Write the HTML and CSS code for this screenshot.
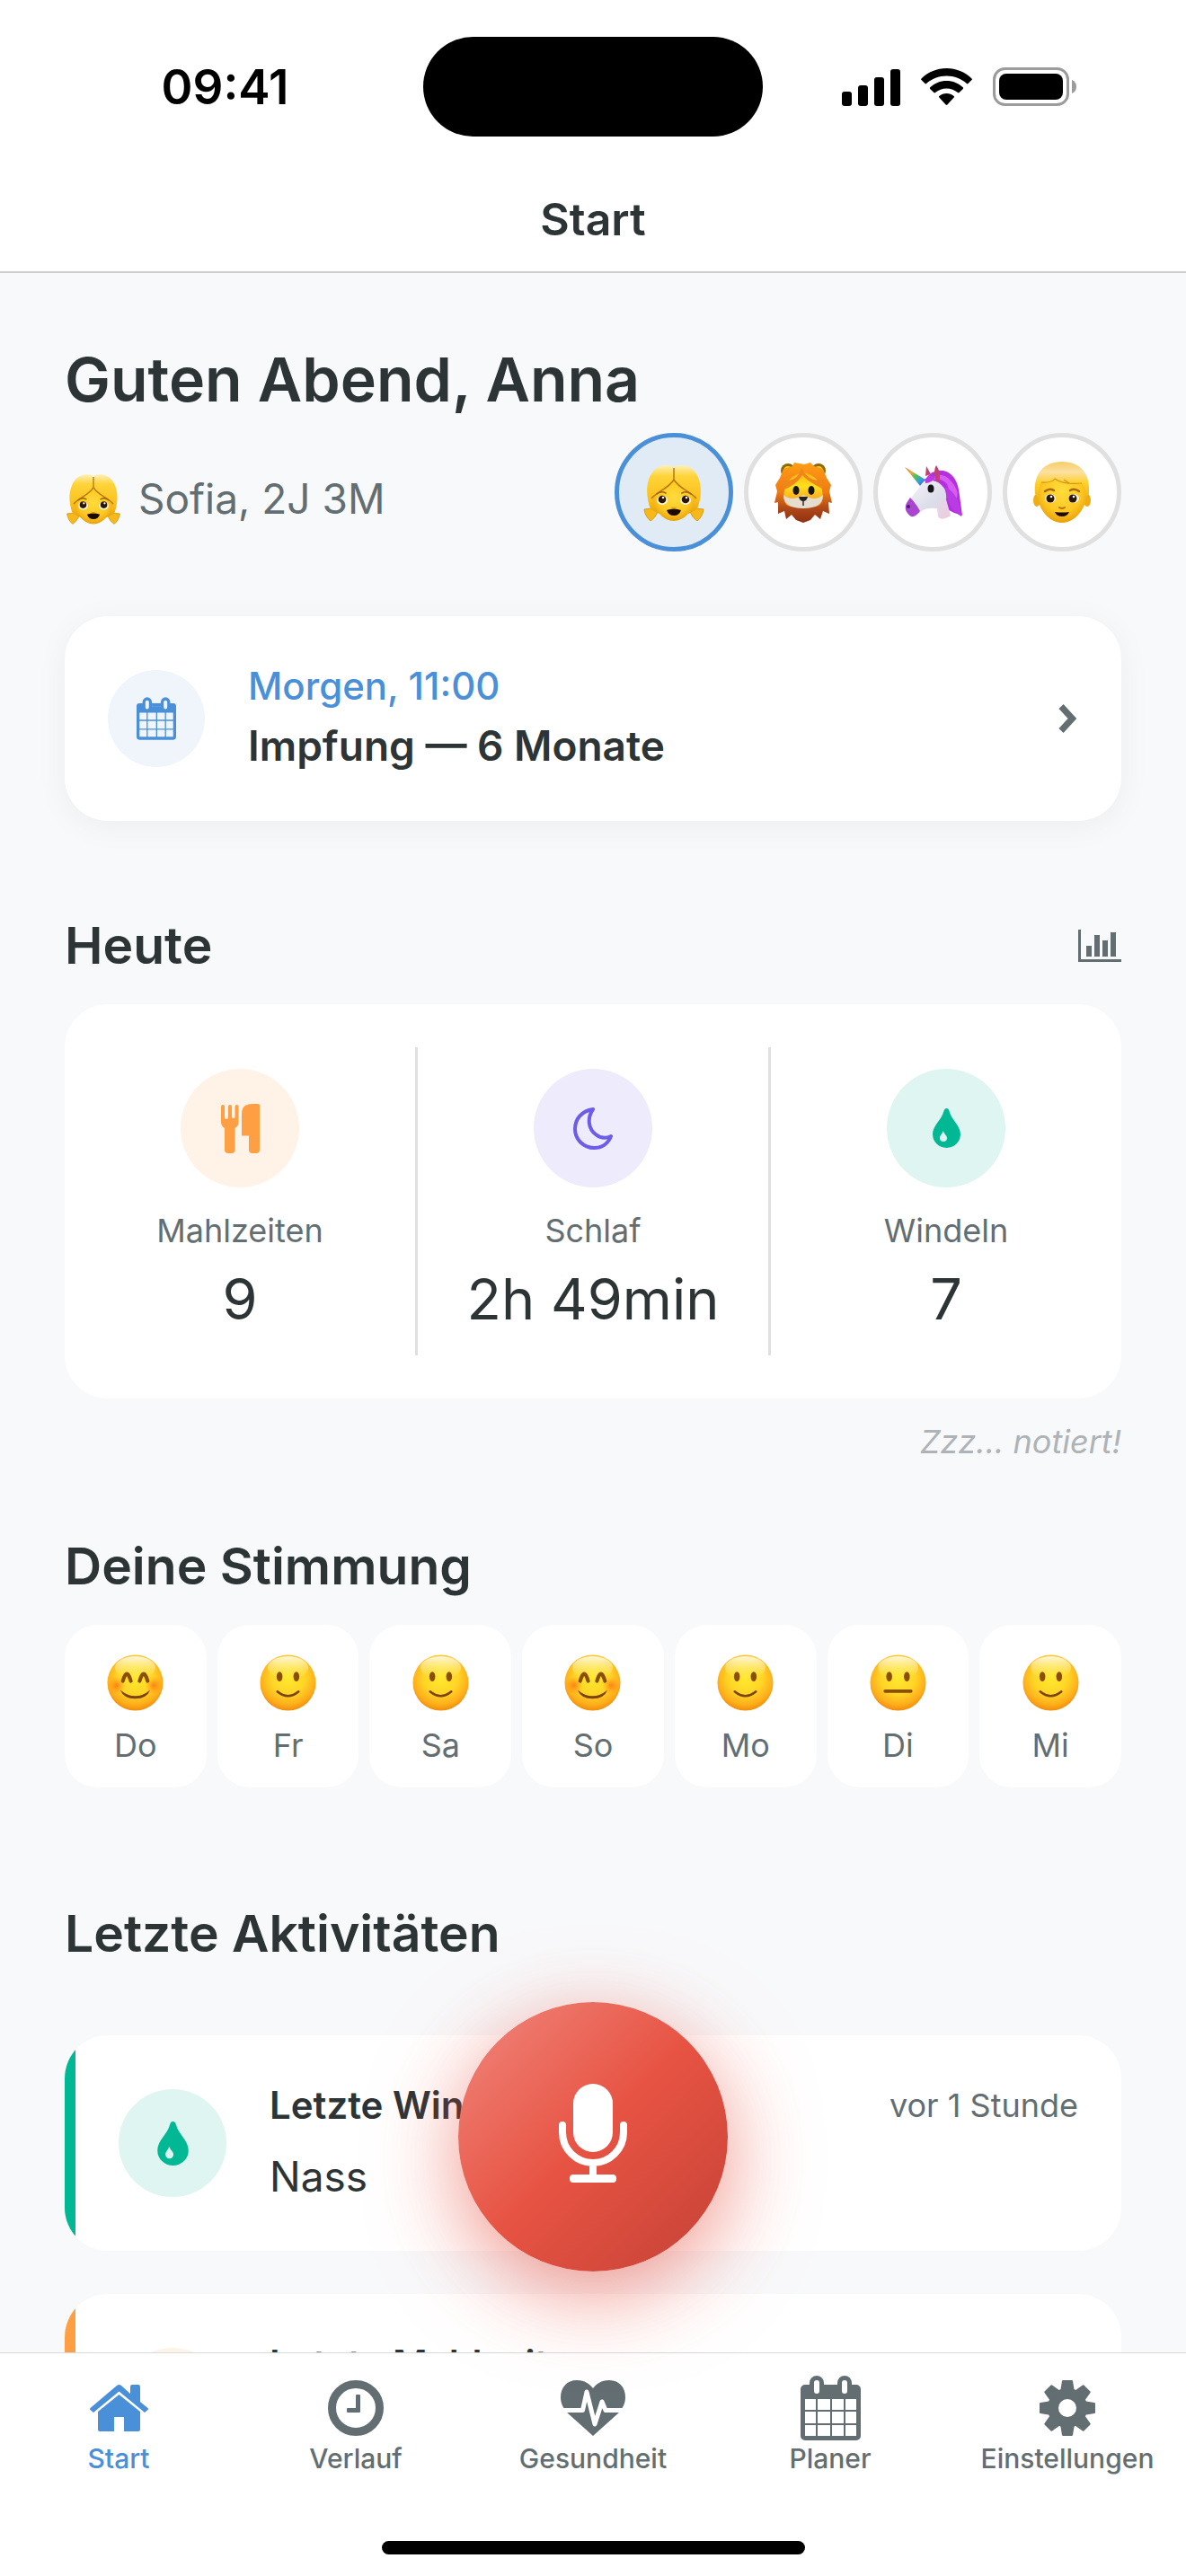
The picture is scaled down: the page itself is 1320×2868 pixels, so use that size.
FILE: index.html
```html
<!DOCTYPE html>
<html lang="de">
<head>
<meta charset="utf-8">
<meta name="viewport" content="width=device-width, initial-scale=1">
<title>Start</title>
<link rel="stylesheet" href="styles.css">
</head>
<body>

<!-- Shared icon shapes -->
<svg class="sprite" aria-hidden="true">
  <defs>
    <linearGradient id="hair" x1="0" y1="0" x2="0" y2="1">
      <stop offset="0" stop-color="#fff0b8"/><stop offset=".22" stop-color="#ffd43a"/><stop offset=".7" stop-color="#fbc01c"/><stop offset="1" stop-color="#e9a10c"/>
    </linearGradient>
    <linearGradient id="cap" x1="0" y1="0" x2="0" y2="1">
      <stop offset="0" stop-color="#f6cf6a"/><stop offset=".3" stop-color="#fbe0a0"/><stop offset=".6" stop-color="#ffd02e"/><stop offset="1" stop-color="#f6b81a"/>
    </linearGradient>
    <radialGradient id="skin" cx=".5" cy=".42" r=".6">
      <stop offset="0" stop-color="#ffdc3c"/><stop offset=".65" stop-color="#fdc722"/><stop offset="1" stop-color="#e69d08"/>
    </radialGradient>
    <radialGradient id="face" cx=".5" cy=".4" r=".62">
      <stop offset="0" stop-color="#ffe92e"/><stop offset=".5" stop-color="#ffd527"/><stop offset=".8" stop-color="#ffae1a"/><stop offset="1" stop-color="#ee8609"/>
    </radialGradient>
    <linearGradient id="shine" x1="0" y1="0" x2="0" y2="1">
      <stop offset="0" stop-color="#fff" stop-opacity=".85"/><stop offset="1" stop-color="#fff27a" stop-opacity="0"/>
    </linearGradient>
    <radialGradient id="blush">
      <stop offset="0" stop-color="#ff6a10" stop-opacity=".75"/><stop offset="1" stop-color="#ff8a10" stop-opacity="0"/>
    </radialGradient>
    <linearGradient id="mane" x1="0" y1="0" x2="0" y2="1">
      <stop offset="0" stop-color="#ff9d14"/><stop offset=".5" stop-color="#ee7a14"/><stop offset=".75" stop-color="#b04a18"/><stop offset="1" stop-color="#8f3012"/>
    </linearGradient>
    <linearGradient id="lionface" x1="0" y1="0" x2="0" y2="1">
      <stop offset="0" stop-color="#ffb01a"/><stop offset=".4" stop-color="#ffe01c"/><stop offset="1" stop-color="#ff8c22"/>
    </linearGradient>
    <linearGradient id="horn" x1="0" y1="0" x2="1" y2="1">
      <stop offset="0" stop-color="#f26a3c"/><stop offset=".3" stop-color="#f0a63a"/><stop offset=".5" stop-color="#4fc25a"/><stop offset=".75" stop-color="#2f9be0"/><stop offset="1" stop-color="#7048d8"/>
    </linearGradient>
    <linearGradient id="horse" x1="0" y1="0" x2="1" y2="1">
      <stop offset="0" stop-color="#f6f5fb"/><stop offset=".6" stop-color="#dcdcea"/><stop offset="1" stop-color="#f3c9dc"/>
    </linearGradient>

    <symbol id="calendar" viewBox="0 0 67 72">
      <path fill="currentColor" fill-rule="evenodd" d="M10 13V8a8 8 0 0 1 16 0v5h15V8a8 8 0 0 1 16 0v2h5a5 5 0 0 1 5 5v52a5 5 0 0 1-5 5H5a5 5 0 0 1-5-5V15a5 5 0 0 1 5-5h5zM15 8v9a3 3 0 0 0 6 0V8a3 3 0 0 0-6 0zM46 8v9a3 3 0 0 0 6 0V8a3 3 0 0 0-6 0zM26 10h15v6H26zM5 26v12h12V26zM19 26v12h14V26zM35 26v12h13V26zM50 26v12h12V26zM5 40v13h12V40zM19 40v13h14V40zM35 40v13h13V40zM50 40v13h12V40zM5 55v12h12V55zM19 55v12h14V55zM35 55v12h13V55zM50 55v12h12V55z"/>
      <path fill="currentColor" d="M26 10h15v6H26z"/>
    </symbol>
    <symbol id="drop" viewBox="0 0 31 44">
      <path fill="currentColor" fill-rule="evenodd" d="M15.500 0C17 0 18 1 18.500 3C21 13 31 19 31 29A15.500 15 0 0 1 0 29C0 19 10 13 12.500 3C13 1 14 0 15.500 0ZM11.700 25C10.500 29 8 30 8 33a4 4 0 0 0 8 0C16 30 13 29 11.700 25Z"/>
    </symbol>
    <symbol id="girl" viewBox="0 0 72 72">
      <path fill="#f6b91c" stroke="#dc9a10" d="M13 54L3 55Q4 63 10 68Q15 65 18 58ZM59 54l10 1q-1 8-7 13q-5-3-8-10Z"/>
      <path fill="url(#hair)" d="M36 8C44 4 54 6 60 14C68 25 67 42 62 55L52 60H20L10 55C5 42 4 25 12 14C18 6 28 4 36 8Z"/>
      <path fill="url(#skin)" d="M36 22C30 32 19 35 12 42C14 56 24 68 36 68S58 56 60 42C53 35 42 32 36 22Z"/>
      <path fill="none" stroke="#b8780c" stroke-width="1.500" d="M36 9V22C30 32 18 35 11 43M36 22C42 32 54 35 61 43"/>
      <path fill="none" stroke="#9c6410" stroke-width="1.500" stroke-linecap="round" d="M17 38q5-4 10-1M45 37q5-3 10 1"/>
      <ellipse cx="23" cy="45" rx="6" ry="5" fill="#fff6e0"/><ellipse cx="49" cy="45" rx="6" ry="5" fill="#fff6e0"/>
      <circle cx="23" cy="44" r="4.300" fill="#2c1606"/><circle cx="49" cy="44" r="4.300" fill="#2c1606"/>
      <circle cx="24" cy="42" r="1.300" fill="#fff"/><circle cx="50" cy="42" r="1.300" fill="#fff"/>
      <path fill="#e49a14" d="M33 52q3 2 6 0l-1 2h-4z"/>
      <path fill="#1d0b02" d="M28 56q8-3 16 0q-2 6-8 6t-8-6Z"/>
    </symbol>
    <symbol id="boy" viewBox="0 0 72 72">
      <ellipse cx="8" cy="45" rx="4" ry="7" fill="#f0ad12"/><ellipse cx="64" cy="45" rx="4" ry="7" fill="#f0ad12"/>
      <path fill="url(#skin)" d="M8 30Q8 10 36 8Q64 10 64 30C66 48 54 70 36 70S6 48 8 30Z"/>
      <path fill="url(#cap)" d="M6 38C4 16 15 2 36 2S68 16 66 38L63 41C62 34 61 30 58 26C45 29 34 26 28 21C24 26 17 26 13 25C11 30 9 35 9 41Z"/>
      <path fill="none" stroke="#d49518" stroke-width="1.200" d="M13 25Q24 26 28 21Q38 28 58 26M38 22l6 4"/>
      <path fill="none" stroke="#a86a0c" stroke-width="2.500" stroke-linecap="round" d="M17 35q5-4 10-1M45 34q5-3 10 1"/>
      <ellipse cx="23" cy="43" rx="6" ry="5" fill="#fff6e0"/><ellipse cx="49" cy="43" rx="6" ry="5" fill="#fff6e0"/>
      <circle cx="23" cy="43" r="4.500" fill="#2c1606"/><circle cx="48" cy="43" r="4.500" fill="#2c1606"/>
      <circle cx="24" cy="41" r="1.300" fill="#fff"/><circle cx="49" cy="41" r="1.300" fill="#fff"/>
      <path fill="none" stroke="#b87410" stroke-width="2" stroke-linecap="round" d="M33 53q3 2 6 0"/>
      <path fill="#1d0b02" d="M28 58q8 1 16 0q-2 5-8 5t-8-5Z"/>
    </symbol>
    <symbol id="lion" viewBox="0 0 72 72">
      <circle cx="19" cy="12" r="8" fill="#8d6a08"/><circle cx="53" cy="12" r="8" fill="#8d6a08"/>
      <circle cx="19" cy="12" r="5" fill="#efd010"/><circle cx="53" cy="12" r="5" fill="#efd010"/>
      <path fill="url(#mane)" d="M26 3L37 5L44 3L48 7L58 10L62 20L67 28L65 35L68 48L64 47L65 60L58 57L55 66L49 61L44 67L36 70L28 67L23 61L17 66L15 57L8 60L8 47L4 48L7 35L5 28L10 20L14 10L24 7Z"/>
      <path fill="url(#lionface)" d="M36 14Q54 18 57 34Q60 50 50 52H22Q12 50 15 34Q18 18 36 14Z"/>
      <path fill="#ee861a" d="M12 23Q30 25 34 9Q42 26 60 22L57 32Q41 24 35 17Q27 29 14 33Z"/>
      <path fill="#e5ddd0" d="M14 39Q23 47 36 39Q49 47 58 39Q58 54 36 54T14 39Z"/>
      <ellipse cx="28" cy="34" rx="3.500" ry="5" fill="#161616"/><ellipse cx="45" cy="34" rx="3.500" ry="5" fill="#161616"/>
      <path fill="#272020" d="M31 41h10q-1 5-5 5t-5-5Z"/><path fill="none" stroke="#3a2a22" stroke-width="1.500" d="M36 46v5"/>
    </symbol>
    <symbol id="unicorn" viewBox="0 0 72 72">
      <path fill="#b52fe0" d="M28 22Q35 10 48 12C61 15 65 28 66 40L69 62L60 59L50 54L40 24Z"/>
      <path fill="#d65cf2" d="M35 20Q46 12 56 23T63 43Q54 36 52 27Q43 18 34 24Z"/>
      <path fill="url(#horn)" d="M5 8L28 22L22 29Z"/>
      <path fill="#c24074" d="M28 18L29 7L34 16ZM40 24Q36 12 40 6Q46 14 43 25Z"/>
      <path fill="url(#horse)" d="M24 27Q32 21 42 25Q53 32 51 44L56 62Q45 69 42 63L41 54Q28 53 24 57L15 63Q4 60 6 50Z"/>
      <path fill="#a945cf" d="M11 42Q18 49 22 57Q17 64 12 63Q3 57 7 48Z"/>
      <path fill="#b93be4" d="M27 22Q34 15 39 19Q35 26 28 26ZM50 30Q66 38 68 63Q51 53 50 30Z"/>
      <ellipse cx="34" cy="32" rx="3.500" ry="4.500" fill="#16161a"/><circle cx="9" cy="52" r="2" fill="#4c1b70"/>
    </symbol>
    <symbol id="ball" viewBox="0 0 64 64">
      <circle cx="32" cy="32" r="31.500" fill="url(#face)"/>
      <ellipse cx="32" cy="15" rx="23" ry="13" fill="url(#shine)"/>
    </symbol>
    <symbol id="smile" viewBox="0 0 64 64">
      <use href="#ball"/>
      <ellipse cx="22.500" cy="25" rx="3.300" ry="5.500" fill="#8a4e04"/><ellipse cx="41.500" cy="25" rx="3.300" ry="5.500" fill="#8a4e04"/>
      <path fill="none" stroke="#7d4304" stroke-width="2.600" stroke-linecap="round" d="M20 42q12 10 24 0"/>
    </symbol>
    <symbol id="happy" viewBox="0 0 64 64">
      <use href="#ball"/>
      <circle cx="11" cy="35" r="10" fill="url(#blush)"/><circle cx="53" cy="35" r="10" fill="url(#blush)"/>
      <path fill="none" stroke="#8a4e04" stroke-width="4.200" stroke-linecap="round" d="M18 30q4.500-16 9 0M37 30q4.500-16 9 0"/>
      <path fill="#7d4304" d="M15 40q17 14 34 0q-4 10-17 10t-17-10Z"/>
    </symbol>
    <symbol id="neutral" viewBox="0 0 64 64">
      <use href="#ball"/>
      <ellipse cx="22" cy="25" rx="3.300" ry="5.500" fill="#8a4e04"/><ellipse cx="42" cy="25" rx="3.300" ry="5.500" fill="#8a4e04"/>
      <path stroke="#8a4e04" stroke-width="3.800" stroke-linecap="round" d="M17.500 41.500h29"/>
    </symbol>
    <symbol id="cutlery" viewBox="0 0 43 55">
      <path fill="currentColor" d="M0 3a2 2 0 0 1 4 0V15a2 2 0 0 0 4 0V3a2 2 0 0 1 4 0V15a2 2 0 0 0 3.500 0V3a2 2 0 0 1 4 0V20q0 5-4 7V51q0 4-4 4H8q-4 0-4-4V27q-4-2-4-7ZM23 11Q23 0 35 0h6q2 0 2 2V51q0 4-4 4h-4q-4 0-4-4V35.500H23Z"/>
    </symbol>
  </defs>
</svg>

<div class="app">
  <header class="topbar">
    <div class="status">
      <span class="time">09:41</span>
      <span class="island"></span>
      <span class="signals">
        <svg width="65" height="42" viewBox="0 0 65 42" aria-hidden="true"><rect y="26" width="11" height="16" rx="3"/><rect x="18" y="19" width="11" height="23" rx="3"/><rect x="36" y="10" width="11" height="32" rx="3"/><rect x="54" y="1" width="11" height="41" rx="3"/></svg>
        <svg width="57" height="42" viewBox="0 0 57 42" aria-hidden="true"><path d="M28.500 0C39 0 49 4 56.500 11.500q.8.800 0 1.600l-4 4q-.8.800-1.600 0C45 11.500 37 8.500 28.500 8.500S12 11.500 6.100 17.100q-.8.800-1.600 0l-4-4q-.8-.8 0-1.600C8 4 18 0 28.500 0Z"/><path d="M28.500 14c7 0 13.500 2.700 18.300 7.300q.8.800 0 1.600l-4.200 4.200q-.8.800-1.600 0c-3.400-3-7.800-4.700-12.500-4.700s-9.100 1.700-12.500 4.700q-.8.800-1.600 0l-4.200-4.200q-.8-.8 0-1.600C15 16.700 21.500 14 28.500 14Z"/><path d="M28.500 28c3.200 0 6 1.100 8.200 3q.8.800 0 1.600l-7.300 8q-.9.900-1.800 0l-7.300-8q-.8-.8 0-1.600c2.200-1.900 5-3 8.200-3Z"/></svg>
        <svg width="94" height="43" viewBox="0 0 94 43" aria-hidden="true"><rect x="1.500" y="1.500" width="82" height="40" rx="12" fill="none" stroke="#9b9b9b" stroke-width="3"/><rect x="7" y="7" width="71" height="29" rx="8"/><path fill="#9b9b9b" d="M88 14q5 2 5 7.500t-5 7.500Z"/></svg>
      </span>
    </div>
    <div class="nav-title">Start</div>
  </header>

  <main class="content">
    <h1>Guten Abend, Anna</h1>
    <div class="child-row">
      <p class="child"><svg class="child-emoji" role="img" aria-label="Mädchen"><use href="#girl"/></svg>Sofia, 2J 3M</p>
      <div class="avatars">
        <button class="avatar active" type="button" aria-label="Sofia"><svg><use href="#girl"/></svg></button>
        <button class="avatar" type="button" aria-label="Löwe"><svg><use href="#lion"/></svg></button>
        <button class="avatar" type="button" aria-label="Einhorn"><svg><use href="#unicorn"/></svg></button>
        <button class="avatar" type="button" aria-label="Junge"><svg><use href="#boy"/></svg></button>
      </div>
    </div>

    <a class="card appointment" href="#planer">
      <span class="bubble blue"><svg width="44" height="48"><use href="#calendar"/></svg></span>
      <span class="appointment-text">
        <span class="when">Morgen, 11:00</span>
        <strong class="what">Impfung — 6 Monate</strong>
      </span>
      <svg class="chevron" width="24" height="34" viewBox="0 0 24 34" aria-hidden="true"><path d="M5 3.500L17.500 17L5 30.500" fill="none" stroke="currentColor" stroke-width="7"/></svg>
    </a>

    <section class="today">
      <div class="section-head">
        <h2>Heute</h2>
        <button class="plain" type="button" aria-label="Statistik"><svg width="48" height="36" viewBox="0 0 48 36"><path fill="currentColor" d="M0 0h3v33h45v3H0zM9 18h6v12H9zM18 6h6v24h-6zM27 12h6v18h-6zM36 3h6v27h-6z"/></svg></button>
      </div>
      <div class="card stats">
        <div class="stat">
          <span class="bubble large orange"><svg width="43" height="55"><use href="#cutlery"/></svg></span>
          <span class="label">Mahlzeiten</span>
          <span class="value">9</span>
        </div>
        <span class="divider"></span>
        <div class="stat">
          <span class="bubble large violet"><svg width="44" height="47" viewBox="0 0 44 47"><path d="M22 2C9 4 2 13 2 24C2 36 12 45 23 45C32 45 39 40 42 32C36 35 30 34 25 30C17 24 15 12 22 2Z" fill="none" stroke="currentColor" stroke-width="4" stroke-linejoin="round"/></svg></span>
          <span class="label">Schlaf</span>
          <span class="value">2h 49min</span>
        </div>
        <span class="divider"></span>
        <div class="stat">
          <span class="bubble large green"><svg width="31" height="44"><use href="#drop"/></svg></span>
          <span class="label">Windeln</span>
          <span class="value">7</span>
        </div>
      </div>
      <p class="note">Zzz... notiert!</p>
    </section>

    <section class="mood">
      <h2>Deine Stimmung</h2>
      <ul class="days">
        <li class="card day"><svg><use href="#happy"/></svg><span class="label">Do</span></li>
        <li class="card day"><svg><use href="#smile"/></svg><span class="label">Fr</span></li>
        <li class="card day"><svg><use href="#smile"/></svg><span class="label">Sa</span></li>
        <li class="card day"><svg><use href="#happy"/></svg><span class="label">So</span></li>
        <li class="card day"><svg><use href="#smile"/></svg><span class="label">Mo</span></li>
        <li class="card day"><svg><use href="#neutral"/></svg><span class="label">Di</span></li>
        <li class="card day"><svg><use href="#smile"/></svg><span class="label">Mi</span></li>
      </ul>
    </section>

    <section class="recent">
      <h2>Letzte Aktivitäten</h2>
      <ul class="activities">
        <li class="card activity diaper">
          <span class="bubble medium green"><svg width="35" height="49"><use href="#drop"/></svg></span>
          <div class="activity-text"><h3>Letzte Windel</h3><p>Nass</p></div>
          <time>vor 1 Stunde</time>
        </li>
        <li class="card activity meal">
          <span class="bubble medium orange"><svg width="43" height="55"><use href="#cutlery"/></svg></span>
          <div class="activity-text"><h3>Letzte Mahlzeit</h3></div>
          <time>vor 1 Stunde</time>
        </li>
      </ul>
    </section>
  </main>

  <footer class="bottom">
    <button class="record" type="button" aria-label="Aufnehmen">
      <svg width="76" height="110" viewBox="0 0 76 110"><rect x="16" width="44" height="76" rx="22" fill="#fff"/><path d="M4 46V54A34 34 0 0 0 72 54V46M38 90V103" fill="none" stroke="#fff" stroke-width="8" stroke-linecap="round"/><rect x="12" y="101" width="52" height="9" rx="4" fill="#fff"/></svg>
    </button>
    <nav class="tabs">
      <a class="tab current" href="#start"><span class="tab-icon"><svg width="65" height="52" viewBox="0 0 65 52"><path fill="currentColor" d="M30 1q2.500-2 5 0L45 10V2q0-2 2-2h7q2 0 2 2V19l8.500 7q1 1 0 2L61 31 32.500 7.500 4 31 .5 28q-1-1 0-2ZM32.500 11 56 30V50q0 2-2 2H38V36H27V52H11q-2 0-2-2V30Z"/></svg></span>Start</a>
      <a class="tab" href="#verlauf"><span class="tab-icon"><svg width="62" height="62" viewBox="0 0 62 62"><circle cx="31" cy="31" r="26.500" fill="none" stroke="currentColor" stroke-width="9"/><path fill="currentColor" d="M32 16h3q1 0 1 1v18q0 1-1 1H22q-1 0-1-1v-3q0-1 1-1h9V17q0-1 1-1Z"/></svg></span>Verlauf</a>
      <a class="tab" href="#gesundheit"><span class="tab-icon"><svg width="72" height="62" viewBox="0 0 72 62"><path fill="currentColor" d="M36 9C40 4 45 0 54 0C66 0 72 9 72 19C72 26 69 31 65 36L36 62L7 36C3 31 0 26 0 19C0 8 7 0 18 0C27 0 32 4 36 9Z"/><path d="M3 33.500H24.500L29 13L38 49L46 24L50 33.500H69" fill="none" stroke="#fff" stroke-width="5" stroke-linejoin="round"/></svg></span>Gesundheit</a>
      <a class="tab" href="#planer"><span class="tab-icon"><svg width="67" height="72"><use href="#calendar"/></svg></span>Planer</a>
      <a class="tab" href="#einstellungen"><span class="tab-icon"><svg width="62" height="62" viewBox="0 0 62 62"><circle cx="31" cy="31" r="16" fill="none" stroke="currentColor" stroke-width="12"/><g fill="currentColor"><path id="tooth" d="M23 13L25 1q.2-1 1-1H36q.8 0 1 1L39 13Z"/><use href="#tooth" transform="rotate(45 31 31)"/><use href="#tooth" transform="rotate(90 31 31)"/><use href="#tooth" transform="rotate(135 31 31)"/><use href="#tooth" transform="rotate(180 31 31)"/><use href="#tooth" transform="rotate(225 31 31)"/><use href="#tooth" transform="rotate(270 31 31)"/><use href="#tooth" transform="rotate(315 31 31)"/></g></svg></span>Einstellungen</a>
    </nav>
    <div class="home-indicator"></div>
  </footer>
</div>
</body>
</html>
```
FILE: styles.css
```css
:root {
  --ink: #2d3436;
  --muted: #636e72;
  --blue: #4a90d9;
  --green: #00b894;
  --orange: #ff9f43;
  --violet: #6c5ce7;
  --line: #e0e0e0;
  --page: #f8f9fb;
}

* { box-sizing: border-box; }

body {
  margin: 0;
  background: var(--page);
  color: var(--ink);
  font-family: Inter, "Liberation Sans", sans-serif;
}

h1, h2, h3, p, ul { margin: 0; padding: 0; }
ul { list-style: none; }
a { color: inherit; text-decoration: none; }
button { border: 0; padding: 0; background: none; color: inherit; font: inherit; }
svg { display: block; flex: none; }

.sprite { position: absolute; width: 0; height: 0; }

.app {
  display: flex;
  flex-direction: column;
  height: 100vh;
}

/* Top bar */
.topbar {
  flex: none;
  background: #fff;
  border-bottom: 2px solid #cccdcf;
}

.status {
  display: grid;
  grid-template-columns: 1fr 378px 1fr;
  align-items: center;
  padding: 41px 0 34px;
}

.time {
  padding-left: 30px;
  text-align: center;
  font-size: 53px;
  line-height: 64px;
  font-weight: 600;
  color: #000;
}

.island {
  height: 111px;
  border-radius: 56px;
  background: #000;
}

.signals {
  display: flex;
  justify-content: center;
  align-items: center;
  gap: 23px;
  padding-right: 34px;
}

.nav-title {
  text-align: center;
  font-size: 50px;
  line-height: 116px;
  font-weight: 600;
}

/* Content */
.content {
  flex: 1;
  min-height: 0;
  overflow: hidden;
  padding: 72px 72px 0;
}

h1 {
  font-size: 68px;
  line-height: 92px;
  font-weight: 600;
}

h2 {
  font-size: 57px;
  line-height: 72px;
  font-weight: 600;
}

.card {
  background: #fff;
  border-radius: 48px;
}

.child-row {
  display: flex;
  align-items: center;
  justify-content: space-between;
  margin: 14px 0 72px;
}

.child {
  display: flex;
  align-items: center;
  gap: 18px;
  padding-top: 14px;
  font-size: 46px;
  line-height: 60px;
  color: var(--muted);
}

.child-emoji { width: 64px; height: 64px; }

.avatars { display: flex; gap: 12px; }

.avatar {
  display: flex;
  align-items: center;
  justify-content: center;
  width: 132px;
  height: 132px;
  border: 5px solid var(--line);
  border-radius: 50%;
  background: #fff;
}

.avatar.active { border-color: var(--blue); background: #e1ebf6; }
.avatar svg { width: 72px; height: 72px; }

.bubble {
  display: flex;
  flex: none;
  align-items: center;
  justify-content: center;
  width: 108px;
  height: 108px;
  border-radius: 50%;
}

.bubble.medium { width: 120px; height: 120px; }
.bubble.large { width: 132px; height: 132px; }
.bubble.blue { color: var(--blue); background: #f0f5fc; }
.bubble.orange { color: var(--orange); background: #fff3e8; }
.bubble.violet { color: var(--violet); background: #edebfc; }
.bubble.green { color: var(--green); background: #dff5f1; }

.appointment {
  display: flex;
  align-items: center;
  gap: 48px;
  padding: 48px;
  box-shadow: 0 6px 36px rgba(0, 0, 0, 0.05);
}

.appointment-text { flex: 1; }
.when, .what { display: block; }
.when { font-size: 42px; line-height: 60px; font-weight: 500; color: var(--blue); }
.what { font-size: 46px; line-height: 72px; font-weight: 600; }
.chevron { color: var(--muted); }

.today { margin-top: 103px; }

.section-head {
  display: flex;
  align-items: center;
  justify-content: space-between;
}

.plain { color: var(--muted); }

.stats {
  display: grid;
  grid-template-columns: 1fr 3px 1fr 3px 1fr;
  margin-top: 29px;
  padding: 48px 0;
}

.divider { background: var(--line); }

.stat {
  display: flex;
  flex-direction: column;
  align-items: center;
  padding: 24px 0;
}

.stat .label { margin: 24px 0 13px; }

.label {
  font-size: 36px;
  line-height: 48px;
  color: var(--muted);
}

.value { font-size: 63px; line-height: 78px; }

.note {
  margin-top: 24px;
  text-align: right;
  font-size: 36px;
  line-height: 48px;
  font-style: italic;
  color: #adb3b6;
}

.mood { margin-top: 79px; }

.days {
  display: grid;
  grid-template-columns: repeat(7, 1fr);
  gap: 12px;
  margin-top: 29px;
}

.day {
  display: flex;
  flex-direction: column;
  align-items: center;
  gap: 14px;
  padding: 33px 0 23px;
  border-radius: 36px;
}

.day svg { width: 63px; height: 63px; }

.recent { margin-top: 127px; }

.activities {
  display: flex;
  flex-direction: column;
  gap: 48px;
  margin-top: 77px;
}

.activity {
  display: flex;
  align-items: center;
  gap: 48px;
  min-height: 240px;
  padding: 50px 48px 50px 60px;
}

/* The coloured edge is painted as background so that it ends in a straight line */
.diaper { background: linear-gradient(90deg, var(--green) 12px, #fff 12px); }
.meal { background: linear-gradient(90deg, var(--orange) 12px, #fff 12px); }

.activity-text { flex: 1; align-self: flex-start; }
.activity h3 { font-size: 42px; line-height: 56px; font-weight: 600; }
.activity p { margin-top: 18px; font-size: 46px; line-height: 66px; }

.activity time {
  align-self: flex-start;
  font-size: 36px;
  line-height: 56px;
  color: var(--muted);
}

/* Bottom bar */
.bottom {
  position: relative;
  flex: none;
  padding: 25px 0 24px;
  border-top: 1px solid #d8dadb;
  background: #fff;
}

.tabs { display: grid; grid-template-columns: repeat(5, 1fr); }

.tab {
  display: flex;
  flex-direction: column;
  align-items: center;
  gap: 2px;
  font-size: 30px;
  line-height: 36px;
  font-weight: 500;
  color: var(--muted);
}

.tab.current { color: var(--blue); }

.tab-icon {
  display: flex;
  align-items: center;
  height: 72px;
}

.home-indicator {
  width: 471px;
  height: 15px;
  margin: 74px auto 0;
  border-radius: 8px;
  background: #000;
}

.record {
  position: absolute;
  top: -391px;
  left: 50%;
  display: flex;
  align-items: center;
  justify-content: center;
  width: 300px;
  height: 300px;
  padding-bottom: 8px;
  margin-left: -150px;
  border-radius: 50%;
  background: linear-gradient(135deg, #f1877d, #e75343 50%, #c44236);
  box-shadow: 0 24px 96px rgba(231, 76, 60, 0.6);
}
```
